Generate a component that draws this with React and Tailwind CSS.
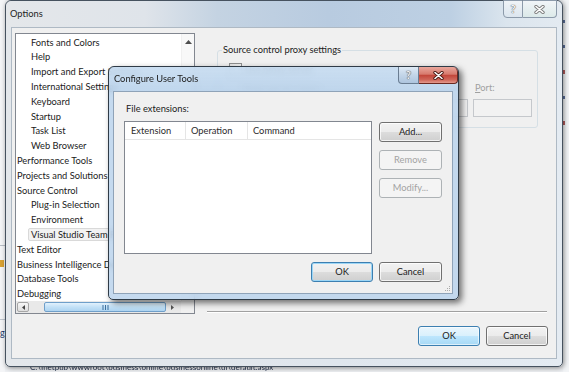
import React from "react";

const tree = [
  ["Fonts and Colors", 1],
  ["Help", 1],
  ["Import and Export Settings", 1],
  ["International Settings", 1],
  ["Keyboard", 1],
  ["Startup", 1],
  ["Task List", 1],
  ["Web Browser", 1],
  ["Performance Tools", 0],
  ["Projects and Solutions", 0],
  ["Source Control", 0],
  ["Plug-in Selection", 1],
  ["Environment", 1],
  ["Visual Studio Team Foundation Server", 1, true],
  ["Text Editor", 0],
  ["Business Intelligence Designers", 0],
  ["Database Tools", 0],
  ["Debugging", 0],
  ["Device Tools", 0],
];

const XGlyph = ({ outline = "#3b3b3b" }) => (
  <svg width="11" height="9" viewBox="0 0 11 9">
    <path d="M2 1.5 L9 7.5 M9 1.5 L2 7.5" stroke={outline} strokeWidth="3.4" strokeLinecap="round" />
    <path d="M2 1.5 L9 7.5 M9 1.5 L2 7.5" stroke="#fff" strokeWidth="1.6" strokeLinecap="round" />
  </svg>
);

const Btn = ({ children, variant = "normal", className = "" }) => {
  const styles = {
    normal:
      "border-[#707070] bg-[linear-gradient(#f2f2f2_0%,#ebebeb_50%,#dddddd_50%,#cfcfcf_100%)] text-[#1b1b1b] shadow-[inset_0_0_0_1px_rgba(255,255,255,0.75)]",
    focus:
      "border-[#3c7fb1] bg-[linear-gradient(#f2f2f2_0%,#ebebeb_50%,#dddddd_50%,#cfcfcf_100%)] text-[#1b1b1b] shadow-[inset_0_0_0_1px_#9cd6f6]",
    glow:
      "border-[#3c7fb1] bg-[linear-gradient(#eaf6fd_0%,#d9f0fc_50%,#bee6fd_50%,#a7d9f5_100%)] text-[#1b1b1b] shadow-[inset_0_0_0_1px_rgba(255,255,255,0.6)]",
    disabled: "border-[#adb2b5] bg-[#f4f4f4] text-[#a3a3a3]",
  };
  return (
    <div
      className={`flex h-[20px] items-center justify-center rounded-[3px] border ${styles[variant]} ${className}`}
    >
      {children}
    </div>
  );
};

const TreeBox = () => (
  <div className="ml-[3px] mt-[5px] flex h-[281px] w-[180px] flex-col overflow-hidden border border-[#828790] bg-white">
    <div className="flex h-[267px]">
      <div className="flex-1 overflow-hidden pt-[1.6px] text-[#1b1b1b]">
        {tree.map(([label, level, selected]) => (
          <div
            key={label}
            className={`h-[14.8px] whitespace-nowrap leading-[14.8px] ${level ? "pl-[15px]" : "pl-[1px]"}`}
          >
            {selected ? (
              <span className="ml-[-3px] inline-block h-[13.5px] rounded-[2px] border border-[#d9d9d9] bg-[#f2f2f2] px-[2px] leading-[12px]">
                {label}
              </span>
            ) : (
              label
            )}
          </div>
        ))}
      </div>
      <div className="flex w-[13px] flex-col items-center border-l border-[#f0f0f0] bg-[#f8f8f8] pt-[6px]">
        <svg width="7" height="4" viewBox="0 0 7 4">
          <path d="M0 4 L3.5 0 L7 4Z" fill="#4d4d4d" />
        </svg>
      </div>
    </div>
    <div className="flex h-[12px] bg-[#e9e9e9]">
      <div className="ml-[1px] mt-[1px] flex h-[10px] w-[12px] items-center justify-center rounded-[2px] border border-[#a6a6a6] bg-[linear-gradient(#f6f6f6,#dedede)]">
        <svg width="3" height="5" viewBox="0 0 3 5">
          <path d="M3 0 L0 2.5 L3 5Z" fill="#444" />
        </svg>
      </div>
      <div className="ml-[15px] mt-[1px] flex h-[10px] w-[122px] items-center justify-center rounded-[2px] border border-[#6f9fca] bg-[linear-gradient(#e2f1fc,#c3e1f7_50%,#aed4f1)]">
        <svg width="7" height="5" viewBox="0 0 7 5">
          <path d="M1 0 V5 M3.5 0 V5 M6 0 V5" stroke="#3b6f9e" strokeWidth="1" />
        </svg>
      </div>
      <div className="ml-[5px] flex items-center">
        <svg width="3" height="5" viewBox="0 0 3 5">
          <path d="M0 0 L3 2.5 L0 5Z" fill="#555" />
        </svg>
      </div>
      <div className="flex-1" />
      <div className="w-[13px] bg-[#f0f0f0]" />
    </div>
  </div>
);

const OptionsWindow = () => (
  <div className="absolute left-[5px] top-0 flex h-[367px] w-[558px] flex-col rounded-t-[6px] rounded-b-[5px] border border-[#46525f] bg-[linear-gradient(90deg,#e3e7eb,#dfe6ed_60%,#e4ebf2)] shadow-[1px_1px_5px_rgba(0,0,0,0.45)]">
    <div className="flex h-[26px] items-start rounded-t-[6px] bg-[linear-gradient(90deg,#e4e7ea_0%,#dfe4ea_25%,#c4d3e2_38%,#b8cbe0_58%,#bdd0e3_80%,#dbe5ee_90%,#e3eaf1_100%)]">
      <span className="self-center pl-[4px] text-[#1e1e1e]">Options</span>
      <div className="flex-1" />
      <div className="mr-[5px] -mt-[1px] flex h-[18px]">
        <div className="flex w-[20px] items-center justify-center rounded-bl-[4px] border border-[#8c9aaa] bg-[linear-gradient(rgba(255,255,255,0.55),rgba(220,230,240,0.35))] font-bold text-[11px] text-[#f7f7f7] [text-shadow:0_0_1px_#555,0_0_1px_#555]">
          ?
        </div>
        <div className="flex w-[34px] items-center justify-center rounded-br-[4px] border border-l-0 border-[#8c9aaa] bg-[linear-gradient(rgba(255,255,255,0.55),rgba(215,235,225,0.45))]">
          <XGlyph outline="#7d7d7d" />
        </div>
      </div>
    </div>
    <div className="mx-[5px] flex h-[332px] border border-[#aeb9c4] bg-[#f0f0f0]">
      <TreeBox />
      <div className="ml-[12px] flex w-[341px] flex-col pb-[12px]">
        <fieldset className="ml-[10px] mt-[15px] w-[321px] rounded-[3px] border border-[#d5dfe5]">
          <legend className="ml-[4px] px-[1px] leading-[14px] text-[#1b1b1b]">
            Source control proxy settings
          </legend>
          <div className="pb-[10px] pl-[11px] pr-[5px]">
            <div className="mt-[6px] flex items-center">
              <div className="h-[13px] w-[13px] border border-[#8e8f8f] bg-[linear-gradient(135deg,#e5e5e5,#ffffff)]" />
              <span className="ml-[3px] leading-[13px] text-[#1b1b1b]">Use proxy server</span>
            </div>
            <div className="mt-[5px] flex gap-[5px] leading-[14px] text-[#a0a0a0]">
              <span className="flex-1 pl-[14px]">
                Proxy <span className="underline">s</span>erver name:
              </span>
              <span className="w-[59px] pl-[2px]">
                <span className="underline">P</span>ort:
              </span>
            </div>
            <div className="mt-[4px] flex gap-[5px]">
              <div className="h-[18px] flex-1 border border-[#c5c8cc] bg-[#f2f2f2]" />
              <div className="h-[18px] w-[59px] border border-[#c5c8cc] bg-[#f2f2f2]" />
            </div>
          </div>
        </fieldset>
        <div className="flex-1" />
        <div className="w-[340px] border-t border-b border-t-[#a0a0a0] border-b-white" />
        <div className="mt-[13px] flex justify-end gap-[6px]">
          <Btn variant="glow" className="w-[62px]">OK</Btn>
          <Btn className="w-[62px]">Cancel</Btn>
        </div>
      </div>
    </div>
  </div>
);

const Dialog = () => (
  <div className="absolute left-[108px] top-[66px] flex h-[234px] w-[351px] flex-col rounded-t-[6px] rounded-b-[5px] border border-[#2f3b47] bg-[rgba(184,210,236,0.82)] shadow-[3px_3px_6px_rgba(0,0,0,0.55)] backdrop-blur-[3px]">
    <div className="flex h-[24px] items-start rounded-t-[6px] bg-[linear-gradient(180deg,rgba(210,228,245,0.5),rgba(180,207,233,0.3))]">
      <span className="self-center pl-[5px] text-[#1b1b1b]">Configure User Tools</span>
      <div className="flex-1" />
      <div className="flex h-[17px]">
        <div className="flex w-[21px] items-center justify-center rounded-bl-[4px] border border-t-0 border-[#6a7d92] bg-[linear-gradient(#dfeaf5,#c3d5e8_50%,#aec5de)] font-bold text-[11px] text-[#f7f7f7] [text-shadow:0_0_1px_#333,0_0_1px_#333]">
          ?
        </div>
        <div className="flex w-[39px] items-center justify-center rounded-br-[4px] rounded-tr-[5px] border border-l-0 border-t-0 border-[#6b2820] bg-[linear-gradient(#e9a79c_0%,#d77a6d_45%,#c3473b_52%,#cf6659_80%,#e49a8e_100%)]">
          <XGlyph outline="#4a1a14" />
        </div>
      </div>
    </div>
    <div className="relative ml-[4px] mr-[5px] flex h-[203px] flex-col border border-[#8fa3b8] bg-[#f0f0f0] pt-[10px]">
      <div className="pl-[12px] leading-[14px] text-[#1b1b1b]">File extensions:</div>
      <div className="mt-[5px] flex pl-[10px]">
        <div className="h-[133px] w-[248px] border border-[#828790] bg-white">
          <div className="flex h-[18px] border-b border-[#e5e5e5] leading-[17px] text-[#2b2b2b]">
            <div className="w-[61px] border-r border-[#e5e5e5] pl-[6px]">Extension</div>
            <div className="w-[62px] border-r border-[#e5e5e5] pl-[5px]">Operation</div>
            <div className="flex-1 pl-[5px]">Command</div>
          </div>
        </div>
        <div className="ml-[7px] mt-[1px] flex w-[63px] flex-col gap-[8px]">
          <Btn>Add...</Btn>
          <Btn variant="disabled">Remove</Btn>
          <Btn variant="disabled">Modify...</Btn>
        </div>
      </div>
      <div className="mt-[8px] flex justify-end gap-[6px] pr-[10px]">
        <Btn variant="focus" className="w-[62px]">OK</Btn>
        <Btn className="w-[63px]">Cancel</Btn>
      </div>
      <svg className="absolute bottom-[1px] right-[1px]" width="7" height="7" viewBox="0 0 7 7">
        <g fill="#a9a9a9">
          <rect x="5" y="1" width="1" height="1" />
          <rect x="3" y="3" width="1" height="1" />
          <rect x="5" y="3" width="1" height="1" />
          <rect x="1" y="5" width="1" height="1" />
          <rect x="3" y="5" width="1" height="1" />
          <rect x="5" y="5" width="1" height="1" />
        </g>
      </svg>
    </div>
  </div>
);

export default function App() {
  return (
    <div className="relative h-[372px] w-[569px] overflow-hidden bg-[#eef0f3] font-[Lato,sans-serif] text-[9.3px]">
      {/* desktop bits peeking around the windows */}
      <div className="absolute left-0 top-0 flex h-full w-[5px] flex-col bg-[#f4f5f7]">
        <div className="mt-[245px] h-px bg-[#b8bec6]" />
        <div className="mt-[14px] h-[7px] w-[4px] bg-[#d9a233]" />
        <div className="mt-[52px] h-px bg-[#c0c6ce]" />
        <div className="mt-[8px] text-[9px] leading-[10px] text-[#1b3a6b]">g</div>
      </div>
      <div className="absolute left-[563px] top-0 flex h-full w-[6px] flex-col gap-[22px] bg-[#f2f4f6] pt-[20px]">
        <div className="h-[3px] w-[2px] bg-[#5a6f9a]" />
        <div className="h-[3px] w-[2px] bg-[#5a6f9a]" />
        <div className="h-[4px] w-[2px] bg-[#b05a5a]" />
        <div className="h-[3px] w-[2px] bg-[#5a6f9a]" />
        <div className="h-[4px] w-[2px] bg-[#b05a5a]" />
      </div>
      <div className="absolute left-[30px] top-[362px] whitespace-nowrap text-[8px] leading-[10px] text-[#27344f] blur-[0.4px]">
        C:\Inetpub\wwwroot\business\online\businessonline\ui\default.aspx
      </div>
      <OptionsWindow />
      <Dialog />
    </div>
  );
}
